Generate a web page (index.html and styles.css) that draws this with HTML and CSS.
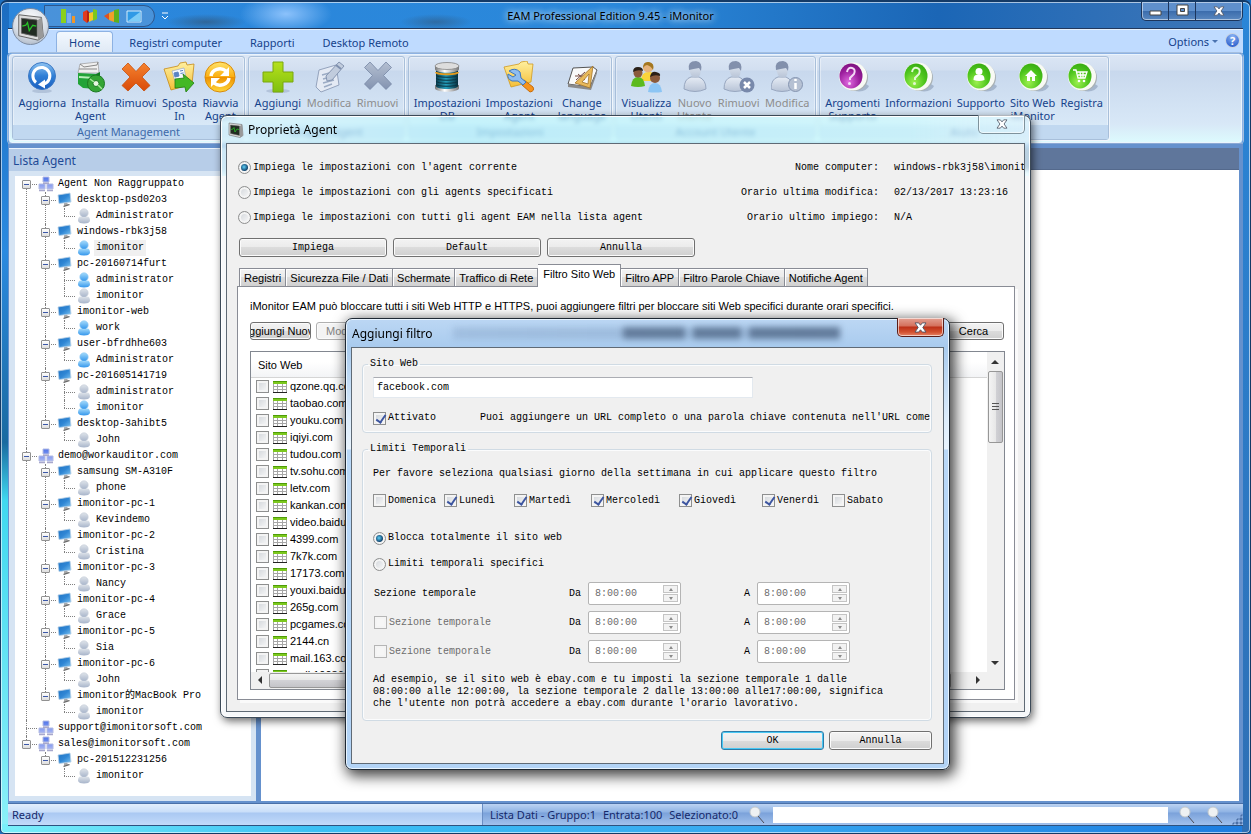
FILE: index.html
```html
<!DOCTYPE html>
<html lang="it">
<head>
    <meta charset="UTF-8">
    <meta name="viewport" content="width=device-width, initial-scale=1.0">
    <title>EAM Professional Edition 9.45 - iMonitor</title>
    <link rel="stylesheet" href="styles.css">
</head>
<body>
    <!-- icons -->
    <svg class="defs" aria-hidden="true">
        <defs>
            <linearGradient id="gBlue" x1="0" y1="0" x2="0" y2="1"><stop offset="0" stop-color="#8fc4f2"/><stop offset=".5" stop-color="#2f7fd6"/><stop offset="1" stop-color="#1b5fc0"/></linearGradient>
            <linearGradient id="gOrange" x1="0" y1="0" x2="0" y2="1"><stop offset="0" stop-color="#f5822e"/><stop offset="1" stop-color="#d94a08"/></linearGradient>
            <linearGradient id="gGold" x1="0" y1="0" x2="0" y2="1"><stop offset="0" stop-color="#ffe36b"/><stop offset=".5" stop-color="#fbae10"/><stop offset=".51" stop-color="#ee9000"/><stop offset="1" stop-color="#ffd83a"/></linearGradient>
            <linearGradient id="gFolder" x1="0" y1="0" x2="0" y2="1"><stop offset="0" stop-color="#fff0a0"/><stop offset="1" stop-color="#f4bf38"/></linearGradient>
            <linearGradient id="gPlus" x1="0" y1="0" x2="0" y2="1"><stop offset="0" stop-color="#b6e01a"/><stop offset="1" stop-color="#7fc010"/></linearGradient>
            <linearGradient id="gGrey" x1="0" y1="0" x2="0" y2="1"><stop offset="0" stop-color="#b4bfd1"/><stop offset="1" stop-color="#8393b0"/></linearGradient>
            <linearGradient id="gBody" x1="0" y1="0" x2="0" y2="1"><stop offset="0" stop-color="#e6ecf5"/><stop offset="1" stop-color="#b7c3d6"/></linearGradient>
            <linearGradient id="gMetal" x1="0" y1="0" x2="1" y2="0"><stop offset="0" stop-color="#777"/><stop offset=".4" stop-color="#fff"/><stop offset="1" stop-color="#777"/></linearGradient>
            <linearGradient id="gTeal" x1="0" y1="0" x2="1" y2="0"><stop offset="0" stop-color="#073a4c"/><stop offset=".45" stop-color="#25a0bd"/><stop offset="1" stop-color="#06303f"/></linearGradient>
            <radialGradient id="gGreen" cx=".4" cy=".75" r=".8"><stop offset="0" stop-color="#9cf04e"/><stop offset=".6" stop-color="#4cc41c"/><stop offset="1" stop-color="#36aa10"/></radialGradient>
            <radialGradient id="gPurple" cx=".4" cy=".75" r=".8"><stop offset="0" stop-color="#e06ae0"/><stop offset=".6" stop-color="#9a1d9c"/><stop offset="1" stop-color="#7a107c"/></radialGradient>
            <linearGradient id="gScreen" x1="0" y1="0" x2="1" y2="1"><stop offset="0" stop-color="#1f74c4"/><stop offset=".5" stop-color="#2f86d4"/><stop offset="1" stop-color="#7cc4f2"/></linearGradient>
            <linearGradient id="gUser" x1="0" y1="0" x2="0" y2="1"><stop offset="0" stop-color="#a5dbfb"/><stop offset="1" stop-color="#3396ec"/></linearGradient>
            <linearGradient id="gOff" x1="0" y1="0" x2="0" y2="1"><stop offset="0" stop-color="#dfe4ea"/><stop offset="1" stop-color="#a7b4ca"/></linearGradient>
            <linearGradient id="gCube" x1="0" y1="0" x2="0" y2="1"><stop offset="0" stop-color="#4f74ea"/><stop offset="1" stop-color="#a9b6f2"/></linearGradient>
        </defs>
        <symbol id="i-refresh" viewBox="0 0 32 32">
            <ellipse cx="16" cy="30" rx="10" ry="2" fill="#8a9cb8" opacity=".4"/>
            <circle cx="16" cy="15" r="13.500" fill="url(#gBlue)" stroke="#3c78c4"/>
            <path d="M10 21.500A8.500 8.500 0 1 1 18 23" fill="none" stroke="#fff" stroke-width="3"/>
            <path d="M19 18.500v9l-7-4z" fill="#fff"/>
        </symbol>
        <symbol id="i-install" viewBox="0 0 32 32">
            <path d="M4 12 6 3l18-2 1 11z" fill="#f0f0f0" stroke="#999" stroke-width=".7"/>
            <path d="M6 3l4 3 13-2 1-3M5 8h18" fill="none" stroke="#888"/>
            <path d="M4 12l18 1v15l-13-1-5-4z" fill="#22a338"/><path d="M22 13l4-2v12l-4 5z" fill="#117a25"/>
            <path d="M5 15l16 1v2L5 17z" fill="#b9efb9"/>
            <circle cx="22" cy="22.500" r="8.500" fill="#35a535" stroke="#1c7a22"/><circle cx="22" cy="22.500" r="3" fill="#e8f7e0" stroke="#1c7a22"/>
            <path d="M16 18l4 3M24 24l4 4" stroke="#a6e89a" stroke-width="1.500"/>
        </symbol>
        <symbol id="i-x" viewBox="0 0 32 32">
            <path d="M8 2l8 8.500L24 2l6 6-8 8 8 8.500-6 5.500-8-8-8 8-6-5.500L10 16 2 8z" fill="url(#gOrange)" stroke="#c8500c" stroke-width=".8" stroke-linejoin="round"/>
        </symbol>
        <symbol id="i-xgrey" viewBox="0 0 32 32">
            <path d="M8 1l8 8.500L24 1l5.500 5.500-8 8 8 8.500-5.500 5.500-8-8-8 8-5.500-5.500 8-8.500-8-8z" fill="url(#gGrey)" stroke="#7686a4" stroke-width=".8"/>
        </symbol>
        <symbol id="i-move" viewBox="0 0 32 32">
            <path d="M1 8l14-3 2-3 6-1 1 3 7-1-2 20-21 6z" fill="url(#gFolder)" stroke="#c78a16" stroke-width=".8"/>
            <path d="M9 10l12-3 2 10-11 3z" fill="#f5f8fd" stroke="#8aa0c8" stroke-width=".6"/><path d="M11 12l4-1 1 4-4 1zM17 10l3-.6M17.500 12.500l3-.6" fill="#5a83c4" stroke="#5a83c4"/>
            <path d="M12 18l9-1-1-4 11 9-8 9-1-5-10 1z" fill="#43b824" stroke="#217c10" stroke-width=".8"/>
        </symbol>
        <symbol id="i-restart" viewBox="0 0 32 32">
            <circle cx="16" cy="16" r="15" fill="url(#gGold)" stroke="#d98a08"/>
            <path d="M7 15a9 8 0 0 1 15-5M25 17a9 8 0 0 1-15 5" fill="none" stroke="#fff" stroke-width="3.500"/>
            <path d="M25 6v9h-9zM7 26v-9h9z" fill="#fff"/>
        </symbol>
        <symbol id="i-plus" viewBox="0 0 32 32">
            <ellipse cx="16" cy="30" rx="12" ry="2" fill="#8a9cb8" opacity=".4"/>
            <path d="M11 1h10v10h10v10H21v10H11V21H1V11h10z" fill="url(#gPlus)" stroke="#7aa80c"/>
        </symbol>
        <symbol id="i-edit" viewBox="0 0 32 32">
            <path d="M6 9l17-5 3 20-18 7-5-5z" fill="#e4eaf4" stroke="#94a3bd"/>
            <path d="M9 14l11-3M10 18l11-3M10 22l11-3M11 26l8-3" stroke="#9babc4" stroke-width="1.500"/>
            <path d="M14 20l-1-5L26 1l5 4-12 14z" fill="#c1ccdd" stroke="#8595b1"/><path d="M23 4l5 4" stroke="#7f90ae" stroke-width="2"/>
        </symbol>
        <symbol id="i-db" viewBox="0 0 32 32">
            <path d="M4 27v-3h24v3c0 5-24 5-24 0z" fill="url(#gMetal)"/>
            <path d="M5 8h22v17c0 4-22 4-22 0z" fill="url(#gTeal)"/>
            <path d="M5 14c0 3 22 3 22 0M5 17c0 3 22 3 22 0M5 20c0 3 22 3 22 0M5 23c0 3 22 3 22 0" fill="none" stroke="#0a3442"/>
            <path d="M5 11c0 3 22 3 22 0" fill="none" stroke="#e39a1e" stroke-width="2"/>
            <path d="M4 5v3c0 5 24 5 24 0V5z" fill="url(#gMetal)"/><ellipse cx="16" cy="5" rx="12" ry="3.500" fill="#ddd" stroke="#777" stroke-width=".7"/>
        </symbol>
        <symbol id="i-tool" viewBox="0 0 32 32">
            <path d="M1 6l15-3 2-2 6-1 1 3 5 0-2 18-20 5z" fill="url(#gFolder)" stroke="#d09a22" stroke-width=".8"/>
            <path d="M21 19l9 7q2 4-3 5l-8-7z" fill="#f5931d" stroke="#c96c08"/>
            <path d="M6 10q6-4 11 1l1 6 5 4-3 3-5-4-6 0q-5-2-4-7l5 3 3-2z" fill="#8fbdf0" stroke="#3c77c0"/>
        </symbol>
        <symbol id="i-lang" viewBox="0 0 32 32">
            <path d="M7 7l20-1 4 3-7 17-22-3z" fill="#fafafa" stroke="#555"/><path d="M2 23l22 3 7-17v3l-6 17-23-3z" fill="#8a8a8a"/>
            <path d="M10 19l9-8M12 13l7 6M9 15l9 0" stroke="#774a40" fill="none"/>
            <path d="M27 5l-3 22-15-5zM23 13l-7 8 6 2z" fill="#e9b95a" stroke="#a2732a" stroke-width=".8" fill-rule="evenodd"/>
        </symbol>
        <symbol id="i-users" viewBox="0 0 32 32">
            <path d="M10 20q0-10 9-9t7 9z" fill="#fbd43a"/><circle cx="17" cy="6.500" r="5" fill="#e6b27a"/><path d="M12 7q0-7 6-6t4 8q-2-4-6-5-2 0-4 3z" fill="#a47720"/>
            <path d="M0 25q1-9 7-9t7 9q-7 2-14 0z" fill="#5cba1e"/><circle cx="7" cy="12" r="4.500" fill="#8a5a3c"/><path d="M2 11q0-5 5-5t5 4q-5-2-10 1z" fill="#2b2018"/>
            <path d="M17 31q1-9 7-9t7 9q-7 1-14 0z" fill="#8cc5f4"/><circle cx="24" cy="17" r="5" fill="#8a5a3c"/><path d="M19 16q1-6 6-5t4 4q-5-2-10 1z" fill="#2b2018"/>
        </symbol>
        <symbol id="i-person" viewBox="0 0 32 32">
            <path d="M5 28q0-10 7-12h8q7 3 7 12-11 5-22 0z" fill="url(#gBody)" stroke="#98a7c0"/>
            <path d="M10 8q-1-7 6-7t6 7l-1 6q-5 6-9 0z" fill="url(#gBody)"/><path d="M10 9q-2-9 7-9 7 1 5 10l-2-3q-6 1-10 2z" fill="#8290ac"/>
        </symbol>
        <symbol id="i-persondel" viewBox="0 0 32 32">
            <use href="#i-person" x="-4" width="32" height="32"/><circle cx="24" cy="24" r="7.500" fill="#7889ab"/><path d="M21 21l6 6m0-6l-6 6" stroke="#fff" stroke-width="2.500"/>
        </symbol>
        <symbol id="i-personinfo" viewBox="0 0 32 32">
            <use href="#i-person" x="-5" width="32" height="32"/><circle cx="24.500" cy="23.500" r="7" fill="#b6c1d3" stroke="#8595b1"/><path d="M24.500 22v6M24.500 18v2" stroke="#fff" stroke-width="2.500"/>
        </symbol>
        <symbol id="i-ball" viewBox="0 0 32 32">
            <path d="M10 28q18 6 22-3l-8-5z" fill="#7d8faa" opacity=".5"/>
            <circle cx="17.500" cy="16.500" r="13.500" fill="#aab2b4"/><circle cx="16" cy="15.500" r="14" fill="#f8faf4"/>
        </symbol>
        <symbol id="i-topics" viewBox="0 0 32 32">
            <use href="#i-ball"/><ellipse cx="14" cy="15" rx="11.500" ry="12.500" fill="url(#gPurple)"/>
            <path d="M10 11q1-5 5-4t2 6l-4 4v2" fill="none" stroke="#f3d9f5" stroke-width="2"/><circle cx="12.500" cy="22.500" r="1.500" fill="#f3d9f5"/>
        </symbol>
        <symbol id="i-info" viewBox="0 0 32 32">
            <use href="#i-ball"/><ellipse cx="14" cy="15" rx="11.500" ry="12.500" fill="url(#gGreen)"/>
            <path d="M10 11q1-5 5-4t2 6l-4 4v2" fill="none" stroke="#e4f8d4" stroke-width="2"/><circle cx="12.500" cy="22.500" r="1.500" fill="#e4f8d4"/>
        </symbol>
        <symbol id="i-support" viewBox="0 0 32 32">
            <use href="#i-ball"/><ellipse cx="14" cy="15" rx="11.500" ry="12.500" fill="url(#gGreen)"/>
            <circle cx="14" cy="10.500" r="3.500" fill="#fff"/><path d="M8.500 19q0-5 3-5h5q3 0 3 5-5 2-11 0z" fill="#fff"/>
        </symbol>
        <symbol id="i-home" viewBox="0 0 32 32">
            <use href="#i-ball"/><ellipse cx="14" cy="15" rx="11.500" ry="12.500" fill="url(#gGreen)"/>
            <path d="M14 9l6 6h-2v5h-3v-4h-2v4h-3v-5H8z" fill="#fff"/>
        </symbol>
        <symbol id="i-cart" viewBox="0 0 32 32">
            <use href="#i-ball"/><ellipse cx="14" cy="15" rx="11.500" ry="12.500" fill="url(#gGreen)"/>
            <path d="M7 9h3l2 8h7l2-6H11M12 14h8M14 11l1 6M17 11v6" fill="none" stroke="#fff" stroke-width="1.300"/><circle cx="13" cy="20" r="1.300" fill="#fff"/><circle cx="18" cy="20" r="1.300" fill="#fff"/>
        </symbol>
        <symbol id="i-logo" viewBox="0 0 32 32">
            <path d="M2 2l26 3 2 22-6 4L2 26z" fill="#dcdcdc" stroke="#555"/><path d="M28 5l2 22-6 4V8z" fill="#999"/>
            <path d="M5 6l18 2v19L5 23z" fill="#222c22" stroke="#666"/><path d="M6 15l4-1 2-3 2 9 4-6 4 1" fill="none" stroke="#28c428" stroke-width="1.500"/>
        </symbol>
        <symbol id="i-group" viewBox="0 0 16 16">
            <path d="M5 1h6v5H5zM1 8h6v5H1zM9 8h6v5H9z" fill="url(#gCube)" stroke="#b4bce4" stroke-linejoin="round"/>
            <path d="M1 14.500h6M9 14.500h6M5 7.200h6" stroke="#a8a8cc" stroke-width="1.500"/>
        </symbol>
        <symbol id="i-pc" viewBox="0 0 16 16">
            <path d="M7 11l3-1 1 3-4 1z" fill="#a8a8a8"/><path d="M6 14l6-2 1 1-6 2z" fill="#6a6a6a"/>
            <path d="M1 3l12-2 1 9-12 1.500z" fill="url(#gScreen)" stroke="#b6cfe6" stroke-width=".8"/>
        </symbol>
        <symbol id="i-on" viewBox="0 0 16 16">
            <circle cx="8" cy="5" r="4.200" fill="url(#gUser)" stroke="#8cc8f4" stroke-width=".6"/><path d="M2 13q0-5 3-4.500 3 1.500 6 0 3-.5 3 4.500-1 2.500-6 2.500t-6-2.500z" fill="url(#gUser)"/>
        </symbol>
        <symbol id="i-off" viewBox="0 0 16 16">
            <circle cx="8" cy="5" r="4.200" fill="url(#gOff)" stroke="#c4ccd8" stroke-width=".6"/><path d="M2 13q0-5 3-4.500 3 1.500 6 0 3-.5 3 4.500-1 2.500-6 2.500t-6-2.500z" fill="url(#gOff)"/>
        </symbol>
        <symbol id="i-table" viewBox="0 0 14 13">
            <path d="M0 1h14v11H0z" fill="#fff"/><path d="M.5 4v8M4.500 4v8M9.500 4v8M13.500 4v8M0 6.500h14M0 9.500h14" stroke="#a6a6a6" fill="none"/>
            <path d="M0 1h14v3H0z" fill="#7cc81e"/><path d="M0 1.500h14" stroke="#4f9c08"/><path d="M0 12.500h14" stroke="#222"/>
        </symbol>
        <symbol id="i-lens" viewBox="0 0 16 18">
            <path d="M9 10l6 7" stroke="#4b4b55"/><circle cx="6" cy="6" r="5" fill="#eef1f2" stroke="#c2c8cc"/>
        </symbol>
        <symbol id="i-close" viewBox="0 0 14 12">
            <path d="M1 1h4l2 2.500L9 1h4L9.500 6l3.500 5H9L7 8.500 5 11H1l3.500-5z" fill="#fff" stroke="#505868"/>
        </symbol>
    </svg>

    <div class="app">
        <header class="titlebar">
            <button class="orb" aria-label="Menu"><svg width="28" height="28"><use href="#i-logo"/></svg></button>
            <div class="quick">
                <button aria-label="Grafico a barre"><svg width="16" height="16" viewBox="0 0 16 16"><path d="M1 1h5v14H1z" fill="#8bd01c"/><path d="M7 5h4v10H7z" fill="#7aaef0"/><path d="M12 8h3v7h-3z" fill="#f0962a"/></svg></button>
                <button aria-label="Grafico 3D"><svg width="16" height="16" viewBox="0 0 16 16"><path d="M1 4l4-2v13l-4-3z" fill="#e03a1e"/><path d="M5 2l3 3v7l-3 3z" fill="#b32210"/><path d="M7 5l4-1v8l-4 2z" fill="#f5c82a"/><path d="M11 1l4 1v9l-4 2z" fill="#7cc81e"/></svg></button>
                <button aria-label="Grafico a colonne"><svg width="16" height="16" viewBox="0 0 16 16"><path d="M0 8l5-3v7z" fill="#e0521e"/><path d="M5 5l5-2v11l-5-2z" fill="#f0a02a"/><path d="M10 2l5-1v14l-5-1z" fill="#5cb01e"/></svg></button>
                <button aria-label="Schermo"><svg width="16" height="16" viewBox="0 0 16 16"><path d="M1 3h14v11H1z" fill="#2f9ae6" stroke="#d5ecfb"/><path d="M2 13L14 4v9z" fill="#7cccf6"/></svg></button>
            </div>
            <button class="quick-more" aria-label="Personalizza"><svg width="8" height="8" viewBox="0 0 8 8"><path d="M1 1h6M1 4l3 3 3-3" fill="none" stroke="#fff"/></svg></button>
            <h1>EAM Professional Edition 9.45 - iMonitor</h1>
            <div class="win-controls">
                <button class="win-min" aria-label="Riduci"><svg width="13" height="12" viewBox="0 0 13 12"><path d="M1 7h11v4H1z" fill="#fff" stroke="#444"/></svg></button>
                <button class="win-max" aria-label="Ingrandisci"><svg width="13" height="12" viewBox="0 0 13 12"><path d="M1 1h11v10H1zM4.500 4.500h4v3h-4z" fill="#fff" fill-rule="evenodd" stroke="#444"/></svg></button>
                <button class="win-close" aria-label="Chiudi"><svg width="12" height="10"><use href="#i-close"/></svg></button>
            </div>
        </header>

        <nav class="tabs">
            <a class="tab active" href="#">Home</a>
            <a class="tab" href="#">Registri computer</a>
            <a class="tab" href="#">Rapporti</a>
            <a class="tab" href="#">Desktop Remoto</a>
            <button class="options">Options <i></i></button>
            <button class="help" aria-label="Aiuto">?</button>
        </nav>

        <div class="ribbon">
            <section class="group g-agent">
                <div class="tools">
                    <button><svg><use href="#i-refresh"/></svg>Aggiorna</button>
                    <button><svg><use href="#i-install"/></svg>Installa<br>Agent</button>
                    <button><svg><use href="#i-x"/></svg>Rimuovi</button>
                    <button><svg><use href="#i-move"/></svg>Sposta<br>In</button>
                    <button><svg><use href="#i-restart"/></svg>Riavvia<br>Agent</button>
                </div>
                <h2>Agent Management</h2>
            </section>
            <section class="group g-groups">
                <div class="tools">
                    <button><svg><use href="#i-plus"/></svg>Aggiungi</button>
                    <button disabled><svg><use href="#i-edit"/></svg>Modifica</button>
                    <button disabled><svg><use href="#i-xgrey"/></svg>Rimuovi</button>
                </div>
                <h2>Gruppo Agent</h2>
            </section>
            <section class="group g-settings">
                <div class="tools">
                    <button><svg><use href="#i-db"/></svg>Impostazioni<br>DB</button>
                    <button><svg><use href="#i-tool"/></svg>Impostazioni<br>Agent</button>
                    <button><svg><use href="#i-lang"/></svg>Change<br>language</button>
                </div>
                <h2>Impostazioni</h2>
            </section>
            <section class="group g-users">
                <div class="tools">
                    <button><svg><use href="#i-users"/></svg>Visualizza<br>Utenti</button>
                    <button disabled><svg><use href="#i-person"/></svg>Nuovo<br>Utente</button>
                    <button disabled><svg><use href="#i-persondel"/></svg>Rimuovi</button>
                    <button disabled><svg><use href="#i-personinfo"/></svg>Modifica</button>
                </div>
                <h2>Account Utente</h2>
            </section>
            <section class="group g-help">
                <div class="tools">
                    <button><svg><use href="#i-topics"/></svg>Argomenti<br>Supporto</button>
                    <button><svg><use href="#i-info"/></svg>Informazioni</button>
                    <button><svg><use href="#i-support"/></svg>Supporto</button>
                    <button><svg><use href="#i-home"/></svg>Sito Web<br>iMonitor</button>
                    <button><svg><use href="#i-cart"/></svg>Registra</button>
                </div>
                <h2>Aiuto</h2>
            </section>
        </div>

        <main class="workspace">
            <aside class="sidebar">
                <h2>Lista Agent</h2>
                <ul class="tree">
                    <li><div class="row"><button class="toggle" aria-label="Comprimi"></button><svg><use href="#i-group"/></svg><span>Agent Non Raggruppato</span></div>
                        <ul>
                            <li><div class="row"><button class="toggle" aria-label="Comprimi"></button><svg><use href="#i-pc"/></svg><span>desktop-psd02o3</span></div>
                                <ul><li><div class="row leaf"><svg><use href="#i-off"/></svg><span>Administrator</span></div></li></ul></li>
                            <li><div class="row"><button class="toggle" aria-label="Comprimi"></button><svg><use href="#i-pc"/></svg><span>windows-rbk3j58</span></div>
                                <ul><li><div class="row leaf"><svg><use href="#i-on"/></svg><span class="selected">imonitor</span></div></li></ul></li>
                            <li><div class="row"><button class="toggle" aria-label="Comprimi"></button><svg><use href="#i-pc"/></svg><span>pc-20160714furt</span></div>
                                <ul><li><div class="row leaf"><svg><use href="#i-on"/></svg><span>administrator</span></div></li>
                                    <li><div class="row leaf"><svg><use href="#i-off"/></svg><span>imonitor</span></div></li></ul></li>
                            <li><div class="row"><button class="toggle" aria-label="Comprimi"></button><svg><use href="#i-pc"/></svg><span>imonitor-web</span></div>
                                <ul><li><div class="row leaf"><svg><use href="#i-on"/></svg><span>work</span></div></li></ul></li>
                            <li><div class="row"><button class="toggle" aria-label="Comprimi"></button><svg><use href="#i-pc"/></svg><span>user-bfrdhhe603</span></div>
                                <ul><li><div class="row leaf"><svg><use href="#i-on"/></svg><span>Administrator</span></div></li></ul></li>
                            <li><div class="row"><button class="toggle" aria-label="Comprimi"></button><svg><use href="#i-pc"/></svg><span>pc-201605141719</span></div>
                                <ul><li><div class="row leaf"><svg><use href="#i-off"/></svg><span>administrator</span></div></li>
                                    <li><div class="row leaf"><svg><use href="#i-on"/></svg><span>imonitor</span></div></li></ul></li>
                            <li><div class="row"><button class="toggle" aria-label="Comprimi"></button><svg><use href="#i-pc"/></svg><span>desktop-3ahibt5</span></div>
                                <ul><li><div class="row leaf"><svg><use href="#i-off"/></svg><span>John</span></div></li></ul></li>
                        </ul>
                    </li>
                    <li><div class="row"><button class="toggle" aria-label="Comprimi"></button><svg><use href="#i-group"/></svg><span>demo@workauditor.com</span></div>
                        <ul>
                            <li><div class="row"><button class="toggle" aria-label="Comprimi"></button><svg><use href="#i-pc"/></svg><span>samsung SM-A310F</span></div>
                                <ul><li><div class="row leaf"><svg><use href="#i-off"/></svg><span>phone</span></div></li></ul></li>
                            <li><div class="row"><button class="toggle" aria-label="Comprimi"></button><svg><use href="#i-pc"/></svg><span>imonitor-pc-1</span></div>
                                <ul><li><div class="row leaf"><svg><use href="#i-off"/></svg><span>Kevindemo</span></div></li></ul></li>
                            <li><div class="row"><button class="toggle" aria-label="Comprimi"></button><svg><use href="#i-pc"/></svg><span>imonitor-pc-2</span></div>
                                <ul><li><div class="row leaf"><svg><use href="#i-off"/></svg><span>Cristina</span></div></li></ul></li>
                            <li><div class="row"><button class="toggle" aria-label="Comprimi"></button><svg><use href="#i-pc"/></svg><span>imonitor-pc-3</span></div>
                                <ul><li><div class="row leaf"><svg><use href="#i-off"/></svg><span>Nancy</span></div></li></ul></li>
                            <li><div class="row"><button class="toggle" aria-label="Comprimi"></button><svg><use href="#i-pc"/></svg><span>imonitor-pc-4</span></div>
                                <ul><li><div class="row leaf"><svg><use href="#i-off"/></svg><span>Grace</span></div></li></ul></li>
                            <li><div class="row"><button class="toggle" aria-label="Comprimi"></button><svg><use href="#i-pc"/></svg><span>imonitor-pc-5</span></div>
                                <ul><li><div class="row leaf"><svg><use href="#i-off"/></svg><span>Sia</span></div></li></ul></li>
                            <li><div class="row"><button class="toggle" aria-label="Comprimi"></button><svg><use href="#i-pc"/></svg><span>imonitor-pc-6</span></div>
                                <ul><li><div class="row leaf"><svg><use href="#i-off"/></svg><span>John</span></div></li></ul></li>
                            <li><div class="row"><button class="toggle" aria-label="Comprimi"></button><svg><use href="#i-pc"/></svg><span>imonitor的MacBook Pro</span></div>
                                <ul><li><div class="row leaf"><svg><use href="#i-off"/></svg><span>imonitor</span></div></li></ul></li>
                        </ul>
                    </li>
                    <li><div class="row leaf"><svg><use href="#i-group"/></svg><span>support@imonitorsoft.com</span></div></li>
                    <li><div class="row"><button class="toggle" aria-label="Comprimi"></button><svg><use href="#i-group"/></svg><span>sales@imonitorsoft.com</span></div>
                        <ul>
                            <li><div class="row"><button class="toggle" aria-label="Comprimi"></button><svg><use href="#i-pc"/></svg><span>pc-201512231256</span></div>
                                <ul><li><div class="row leaf"><svg><use href="#i-off"/></svg><span>imonitor</span></div></li></ul></li>
                        </ul>
                    </li>
                </ul>
            </aside>
            <section class="content"><div class="content-head"></div></section>
        </main>

        <footer class="statusbar">
            <div class="ready">Ready</div>
            <div class="counts">
                <span>Lista Dati - Gruppo:1</span><span>Entrata:100</span><span>Selezionato:0</span>
                <svg><use href="#i-lens"/></svg>
                <input type="text" aria-label="Cerca nella lista">
                <button aria-label="Cerca precedente"><svg><use href="#i-lens"/></svg></button>
                <button aria-label="Cerca successivo"><svg><use href="#i-lens"/></svg></button>
                <i class="grip"></i>
            </div>
        </footer>
    </div>

    <!-- agent properties -->
    <div class="dialog props" role="dialog" aria-labelledby="props-title">
        <div class="dialog-title">
            <svg width="16" height="16"><use href="#i-logo"/></svg>
            <h2 id="props-title">Proprietà Agent</h2>
            <button class="dialog-close" aria-label="Chiudi"><svg width="12" height="10"><use href="#i-close"/></svg></button>
        </div>
        <div class="dialog-body">
            <div class="props-head">
                <div class="scope">
                    <label><input type="radio" name="scope" checked>Impiega le impostazioni con l'agent corrente</label>
                    <label><input type="radio" name="scope">Impiega le impostazioni con gli agents specificati</label>
                    <label><input type="radio" name="scope">Impiega le impostazioni con tutti gli agent EAM nella lista agent</label>
                </div>
                <dl>
                    <dt>Nome computer:</dt><dd>windows-rbk3j58\imonitor</dd>
                    <dt>Orario ultima modifica:</dt><dd>02/13/2017 13:23:16</dd>
                    <dt>Orario ultimo impiego:</dt><dd>N/A</dd>
                </dl>
            </div>
            <div class="props-actions">
                <button class="btn">Impiega</button>
                <button class="btn">Default</button>
                <button class="btn">Annulla</button>
            </div>
            <div class="props-tabs">
                <button>Registri</button>
                <button>Sicurezza File / Dati</button>
                <button>Schermate</button>
                <button>Traffico di Rete</button>
                <button class="active">Filtro Sito Web</button>
                <button>Filtro APP</button>
                <button>Filtro Parole Chiave</button>
                <button>Notifiche Agent</button>
            </div>
            <div class="pane">
                <p>iMonitor EAM può bloccare tutti i siti Web HTTP e HTTPS, puoi aggiungere filtri per bloccare siti Web specifici durante orari specifici.</p>
                <div class="pane-actions">
                    <button class="btn"><span>Aggiungi Nuovo</span></button>
                    <button class="btn" disabled>Modifica</button>
                    <button class="btn search">Cerca</button>
                </div>
                <div class="list">
                    <div class="list-rows">
                        <table>
                            <thead><tr><th>Sito Web</th></tr></thead>
                            <tbody>
                                <tr><td><label><input type="checkbox"><svg><use href="#i-table"/></svg>qzone.qq.com</label></td></tr>
                                <tr><td><label><input type="checkbox"><svg><use href="#i-table"/></svg>taobao.com</label></td></tr>
                                <tr><td><label><input type="checkbox"><svg><use href="#i-table"/></svg>youku.com</label></td></tr>
                                <tr><td><label><input type="checkbox"><svg><use href="#i-table"/></svg>iqiyi.com</label></td></tr>
                                <tr><td><label><input type="checkbox"><svg><use href="#i-table"/></svg>tudou.com</label></td></tr>
                                <tr><td><label><input type="checkbox"><svg><use href="#i-table"/></svg>tv.sohu.com</label></td></tr>
                                <tr><td><label><input type="checkbox"><svg><use href="#i-table"/></svg>letv.com</label></td></tr>
                                <tr><td><label><input type="checkbox"><svg><use href="#i-table"/></svg>kankan.com</label></td></tr>
                                <tr><td><label><input type="checkbox"><svg><use href="#i-table"/></svg>video.baidu.com</label></td></tr>
                                <tr><td><label><input type="checkbox"><svg><use href="#i-table"/></svg>4399.com</label></td></tr>
                                <tr><td><label><input type="checkbox"><svg><use href="#i-table"/></svg>7k7k.com</label></td></tr>
                                <tr><td><label><input type="checkbox"><svg><use href="#i-table"/></svg>17173.com</label></td></tr>
                                <tr><td><label><input type="checkbox"><svg><use href="#i-table"/></svg>youxi.baidu.com</label></td></tr>
                                <tr><td><label><input type="checkbox"><svg><use href="#i-table"/></svg>265g.com</label></td></tr>
                                <tr><td><label><input type="checkbox"><svg><use href="#i-table"/></svg>pcgames.com.cn</label></td></tr>
                                <tr><td><label><input type="checkbox"><svg><use href="#i-table"/></svg>2144.cn</label></td></tr>
                                <tr><td><label><input type="checkbox"><svg><use href="#i-table"/></svg>mail.163.com</label></td></tr>
                                <tr><td><label><input type="checkbox"><svg><use href="#i-table"/></svg>mail.10086.cn</label></td></tr>
                            </tbody>
                        </table>
                    </div>
                    <div class="vscroll"><i class="arrow up"></i><div class="thumb"></div><i class="arrow down"></i></div>
                    <div class="hscroll"><i class="arrow left"></i><div class="thumb"></div><i class="arrow right"></i></div>
                </div>
            </div>
        </div>
    </div>

    <!-- add filter -->
    <div class="dialog filter" role="dialog" aria-labelledby="filter-title">
        <div class="dialog-title">
            <h2 id="filter-title">Aggiungi filtro</h2>
            <i class="smudge"></i>
            <button class="dialog-close red" aria-label="Chiudi"><svg width="13" height="11"><use href="#i-close"/></svg></button>
        </div>
        <div class="dialog-body">
            <fieldset class="site">
                <legend>Sito Web</legend>
                <input type="text" class="url" aria-label="Sito Web" value="facebook.com" autofocus>
                <div class="site-row">
                    <label><input type="checkbox" checked>Attivato</label>
                    <span>Puoi aggiungere un URL completo o una parola chiave contenuta nell'URL come</span>
                </div>
            </fieldset>
            <fieldset class="limits">
                <legend>Limiti Temporali</legend>
                <p>Per favore seleziona qualsiasi giorno della settimana in cui applicare questo filtro</p>
                <div class="days">
                    <label><input type="checkbox">Domenica</label>
                    <label><input type="checkbox" checked>Lunedì</label>
                    <label><input type="checkbox" checked>Martedì</label>
                    <label><input type="checkbox" checked>Mercoledì</label>
                    <label><input type="checkbox" checked>Giovedì</label>
                    <label><input type="checkbox" checked>Venerdì</label>
                    <label><input type="checkbox">Sabato</label>
                </div>
                <label class="mode"><input type="radio" name="mode" checked>Blocca totalmente il sito web</label>
                <label class="mode"><input type="radio" name="mode">Limiti temporali specifici</label>
                <div class="slots">
                    <div class="slot">
                        <span class="slot-name">Sezione temporale</span>
                        <label for="from1">Da</label>
                        <div class="spin"><input type="text" id="from1" value="8:00:00" disabled><div><button disabled aria-label="Su"></button><button disabled aria-label="Giù"></button></div></div>
                        <label for="to1" class="to">A</label>
                        <div class="spin"><input type="text" id="to1" value="8:00:00" disabled><div><button disabled aria-label="Su"></button><button disabled aria-label="Giù"></button></div></div>
                    </div>
                    <div class="slot">
                        <label class="slot-name off"><input type="checkbox" disabled>Sezione temporale</label>
                        <label for="from2">Da</label>
                        <div class="spin"><input type="text" id="from2" value="8:00:00" disabled><div><button disabled aria-label="Su"></button><button disabled aria-label="Giù"></button></div></div>
                        <label for="to2" class="to">A</label>
                        <div class="spin"><input type="text" id="to2" value="8:00:00" disabled><div><button disabled aria-label="Su"></button><button disabled aria-label="Giù"></button></div></div>
                    </div>
                    <div class="slot">
                        <label class="slot-name off"><input type="checkbox" disabled>Sezione temporale</label>
                        <label for="from3">Da</label>
                        <div class="spin"><input type="text" id="from3" value="8:00:00" disabled><div><button disabled aria-label="Su"></button><button disabled aria-label="Giù"></button></div></div>
                        <label for="to3" class="to">A</label>
                        <div class="spin"><input type="text" id="to3" value="8:00:00" disabled><div><button disabled aria-label="Su"></button><button disabled aria-label="Giù"></button></div></div>
                    </div>
                </div>
                <p class="example">Ad esempio, se il sito web è ebay.com e tu imposti la sezione temporale 1 dalle<br>08:00:00 alle 12:00:00, la sezione temporale 2 dalle 13:00:00 alle17:00:00, significa<br>che l'utente non potrà accedere a ebay.com durante l'orario lavorativo.</p>
            </fieldset>
            <div class="filter-actions">
                <button class="btn primary">OK</button>
                <button class="btn">Annulla</button>
            </div>
        </div>
    </div>
</body>
</html>
```
FILE: styles.css
```css
* {
    box-sizing: border-box;
}
body {
    margin: 0;
    font-family: "Noto Sans", "Open Sans", sans-serif;
    font-size: 11px;
    color: #000;
    background: #1d6fc0;
}
h1, h2, p, ul, dl, dd {
    margin: 0;
    padding: 0;
    font-weight: normal;
    font-size: inherit;
}
ul { list-style: none; }
button {
    font: inherit;
    color: inherit;
    border: none;
    background: none;
    padding: 0;
}
a { color: inherit; text-decoration: none; }
.defs {
    position: absolute;
    width: 0;
    height: 0;
}

/* main window */
.app {
    min-height: 100vh;
    display: flex;
    flex-direction: column;
    color: #15428b;
    border: 1px solid #143a66;
    border-top-width: 2px;
    border-radius: 7px 7px 5px 5px;
    box-shadow: inset 0 0 0 1px rgba(255, 255, 255, 0.6);
    padding: 0 7px 7px;
    background:
        linear-gradient(#2a86d8, #2f6fb4) right top / 8px 100% no-repeat,
        linear-gradient(90deg, #7af0fa, #3cc0f4 25%, #38a8f0 60%, #1c7ce0) left bottom / 100% 9px no-repeat,
        linear-gradient(#1c6cc0, #2b8ae0 30%, #1a6aa0 53%, #40d8f0 60%, #8cf0f8) left top / 8px 100% no-repeat,
        radial-gradient(ellipse 46px 20px at 285px 12px, rgba(150, 200, 255, 0.9), transparent) no-repeat,
        radial-gradient(ellipse 40px 8px at 205px 20px, rgba(50, 80, 110, 0.6), transparent) no-repeat,
        radial-gradient(ellipse 36px 8px at 435px 20px, rgba(50, 80, 110, 0.5), transparent) no-repeat,
        linear-gradient(90deg, #2b86dc, #2a88da 50%, #1b66b6 75%, #4178b8);
}
.titlebar {
    position: relative;
    display: flex;
    height: 26px;
}
.orb {
    position: absolute;
    left: 4px;
    top: 6px;
    z-index: 2;
    width: 37px;
    height: 37px;
    border-radius: 50%;
    border: 1px solid #7d8ca2;
    background: radial-gradient(circle at 50% 30%, #fff, #d4dbe4 60%, #9aa7b8);
    display: flex;
    align-items: center;
    justify-content: center;
}
.quick {
    display: flex;
    align-items: center;
    gap: 6px;
    height: 22px;
    margin: 3px 0 0 36px;
    padding: 0 12px 0 15px;
    border: 1px solid #2e568c;
    border-radius: 0 11px 11px 0;
    background: rgba(120, 165, 215, 0.4);
}
.quick button { height: 16px; }
.quick-more {
    width: 20px;
    height: 26px;
}
.titlebar h1 {
    position: absolute;
    left: 0;
    right: 0;
    top: 6px;
    line-height: 16px;
    padding-right: 30px;
    text-align: center;
    color: #000;
    text-shadow: 0 0 6px #cfe6ff, 0 0 8px #cfe6ff;
}
.win-controls {
    position: relative;
    display: flex;
    height: 19px;
    margin-left: auto;
    border: 1px solid #1c355c;
    border-top: none;
    border-radius: 0 0 5px 5px;
    box-shadow: inset 0 0 0 1px rgba(255, 255, 255, 0.5);
    background: linear-gradient(#5f90cc 50%, #3a6cac 50%, #5a88c0);
}
.win-controls button {
    width: 27px;
    border-right: 1px solid #1c355c;
}
.win-controls .win-close {
    width: 46px;
    border-right: none;
}

/* ribbon */
.tabs {
    display: flex;
    align-items: flex-end;
    height: 25px;
    padding-left: 48px;
    background: #bfdbff;
    border-top: 1px solid #22385c;
    box-shadow: inset 0 1px #e6f2ff;
}
.tab {
    height: 22px;
    line-height: 20px;
    padding: 2px 12px 0;
    margin-right: 4px;
}
.tab.active {
    background: linear-gradient(#f2f8fe, #dfe9f5);
    border: 1px solid #8db2e3;
    border-bottom: none;
    border-radius: 4px 4px 0 0;
    line-height: 18px;
}
.options {
    margin: 0 8px 4px auto;
}
.options i {
    display: inline-block;
    vertical-align: 3px;
    border: 3px solid transparent;
    border-top-color: #4a73b0;
    border-bottom: none;
}
.help {
    width: 13px;
    height: 13px;
    margin: 0 4px 6px 0;
    border-radius: 50%;
    background: radial-gradient(circle at 50% 20%, #8ab4f4, #1d50c4);
    box-shadow: 0 0 0 1px #c8d2e0;
    color: #fff;
    font-weight: bold;
    line-height: 13px;
}
.ribbon {
    display: flex;
    gap: 3px;
    height: 91px;
    padding: 2px 3px 3px;
    border: 1px solid #8db2e3;
    border-radius: 4px;
    background: linear-gradient(#dce7f5, #d2dff0 16px, #c8d8ed 17px, #d8e8f7 70px, #ddfbfe);
    box-shadow: inset 0 0 0 1px #eaf4fd, 0 0 0 1px #a5bfdf;
}
.group {
    display: flex;
    flex-direction: column;
    height: 84px;
    border: 1px solid #a8bfda;
    border-radius: 3px;
    box-shadow: inset 0 0 0 1px rgba(255, 255, 255, 0.4), 1px 1px #f0f6fc;
}
.g-agent { width: 233px; }
.g-groups { width: 157px; }
.g-settings { width: 204px; }
.g-users { width: 201px; }
.g-help { width: 290px; }
.tools {
    display: flex;
    justify-content: space-evenly;
    height: 68px;
    padding-top: 4px;
}
.tools button {
    display: flex;
    flex-direction: column;
    align-items: center;
    white-space: nowrap;
    line-height: 13px;
}
.tools svg {
    width: 32px;
    height: 32px;
    margin-bottom: 3px;
}
.tools button:disabled { color: #8d8d8d; }
.group h2 {
    flex: 1;
    text-align: center;
    line-height: 14px;
    color: #3e6aaa;
    background: #c1d8f0;
}

/* workspace */
.workspace {
    flex: 1;
    display: flex;
    gap: 5px;
    margin-top: -1px;
    padding: 4px 4px 2px 1px;
    background: #6591cd;
    border-top: 1px solid #8ba9d4;
}
.sidebar {
    width: 247px;
    padding: 0 5px 5px 6px;
    background: #d6e4f3;
    border-top: 1px solid #eaf3fc;
}
.sidebar h2 {
    height: 22px;
    margin: 0 -5px 0 -6px;
    padding-left: 4px;
    line-height: 23px;
    font-size: 12px;
    background: #b7cde8;
    color: #1e4a96;
}
.tree {
    margin-top: 5px;
    min-height: 620px;
    background: #fff;
    color: #000;
    font: 10px/16px "Liberation Mono", "Noto Sans CJK SC", monospace;
}
.tree ul { padding-left: 19px; }
.tree li { position: relative; }
.tree li::before {
    content: "";
    position: absolute;
    left: 11px;
    top: 0;
    bottom: 0;
    border-left: 1px dotted #808080;
}
.tree > li:first-child::before { top: 8px; }
.tree li:last-child::before { height: 8px; }
.tree li::after {
    content: "";
    position: absolute;
    left: 11px;
    top: 8px;
    width: 11px;
    border-top: 1px dotted #808080;
}
.row {
    display: flex;
    align-items: center;
    height: 16px;
    padding-left: 7px;
    white-space: nowrap;
}
.toggle {
    position: relative;
    z-index: 1;
    width: 9px;
    height: 9px;
    margin-right: 7px;
    border: 1px solid #919191;
    border-radius: 1px;
    background: linear-gradient(#3c58a8, #3c58a8) center / 5px 1px no-repeat, linear-gradient(#fff, #ddd);
}
.row.leaf { padding-left: 23px; }
.row svg {
    width: 16px;
    height: 16px;
    margin-right: 2px;
}
.row span { padding: 0 2px; }
.row .selected { background: #f0f0f0; }
.content {
    flex: 1;
    background: #fff;
}
.content-head {
    height: 22px;
    background: #5f769b;
    border-bottom: 1px solid #54698c;
}
.statusbar {
    display: flex;
    height: 23px;
    color: #15296b;
    line-height: 22px;
    border-top: 1px solid #4a70a8;
    border-bottom: 1px solid #2e527f;
    background: linear-gradient(#e2eefc, #c9def9 8px, #aac8f2 9px, #c2dafa);
}
.ready {
    width: 475px;
    padding-left: 4px;
    border-right: 1px solid #6a8ec4;
}
.counts {
    flex: 1;
    display: flex;
    align-items: center;
    gap: 7px;
    padding-left: 7px;
    background: linear-gradient(#bcd3f2, #8fb3e4 8px, #7ba2da 9px, #a2c1ec);
}
.counts svg {
    width: 16px;
    height: 18px;
    margin: 0 1px 0 4px;
    display: block;
}
.counts input {
    flex: 1;
    height: 16px;
    border: none;
    background: #fff;
}
.grip {
    align-self: flex-end;
    width: 12px;
    height: 12px;
    background: radial-gradient(#4b6fa6 1px, transparent 2px) 0 0 / 4px 4px;
    clip-path: polygon(100% 0, 100% 100%, 0 100%);
}

/* dialogs */
.dialog {
    position: absolute;
    display: flex;
    flex-direction: column;
    padding: 0 5px 5px;
    border: 1px solid #3c4a58;
    border-radius: 7px;
}
.dialog-title {
    position: relative;
    display: flex;
    height: 27px;
    align-items: center;
}
.dialog-title h2 { font-size: 12px; }
.dialog-body {
    flex: 1;
    border: 1px solid #5f6a75;
    background: #f0f0f0;
    overflow: hidden;
    font: 10px/12px "Liberation Mono", monospace;
}
.dialog-close {
    position: absolute;
    right: 0;
    top: -1px;
    width: 47px;
    height: 19px;
    display: flex;
    align-items: center;
    justify-content: center;
    border: 1px solid #7f929c;
    border-top: none;
    border-radius: 0 0 5px 5px;
    box-shadow: inset 0 0 0 1px rgba(255, 255, 255, 0.6);
}
.dialog-close.red {
    border-color: #5a1d18;
    background: linear-gradient(#e3a193, #d4705c 8px, #bc3018 9px, #d2502f 14px, #e88668);
}
.dialog label {
    display: flex;
    align-items: center;
    gap: 2px;
}
.props {
    left: 220px;
    top: 115px;
    width: 811px;
    background: linear-gradient(90deg, rgba(222, 250, 255, 0.6), rgba(186, 250, 255, 0.6) 30%, rgba(206, 255, 255, 0.6) 85%, rgba(226, 248, 255, 0.7)) top / 100% 60px no-repeat, linear-gradient(transparent 60px, #f6f8fa 60px);
    backdrop-filter: blur(2px);
    box-shadow: inset 0 0 0 1px #fff, 2px 3px 8px rgba(0, 0, 0, 0.6);
}
.props .dialog-title { padding-left: 2px; gap: 4px; }
.filter {
    left: 345px;
    top: 318px;
    width: 605px;
    border-color: #1e2833;
    background: linear-gradient(#bcd7f4, #a9cbee 28px, #dcecfb 100px, #e8f3fd 130px, #b9d8f8 131px, #b2d3f6);
    box-shadow: inset 0 0 0 1px #e8f4ff, 3px 4px 14px 2px rgba(0, 0, 0, 0.75);
}
.filter .dialog-title {
    height: 28px;
    padding-left: 1px;
}
.smudge {
    flex: 1;
    height: 12px;
    margin: 0 104px 0 20px;
    filter: blur(3px);
    background:
        linear-gradient(90deg, transparent 170px, rgba(40, 60, 90, 0.5) 170px 232px, transparent 232px 240px, rgba(40, 60, 90, 0.5) 240px 288px, transparent 288px 296px, rgba(40, 60, 90, 0.5) 296px),
        linear-gradient(90deg, rgba(60, 90, 130, 0.15), rgba(60, 90, 130, 0.2));
}

/* form controls */
input[type="radio"], input[type="checkbox"] {
    appearance: none;
    flex: none;
    width: 13px;
    height: 13px;
    margin: 0;
    border: 1px solid #8e8f8f;
    background: linear-gradient(135deg, #cfd3d8, #fbfbfb);
    box-shadow: inset 0 0 0 2px #f4f4f4;
}
input[type="radio"] { border-radius: 50%; }
input[type="radio"]:checked {
    background: radial-gradient(circle at 5px 5px, #5fd0f8, #0c3c66 4px, #f0f0f0 5px);
}
input[type="checkbox"]:checked::before {
    content: "";
    display: block;
    width: 4px;
    height: 8px;
    margin: 0 0 0 4px;
    border: solid #3c55a0;
    border-width: 0 2px 2px 0;
    transform: rotate(35deg);
}
input[type="checkbox"]:disabled {
    border-color: #b5b5b5;
    background: #f6f6f6;
}
.btn {
    height: 19px;
    border: 1px solid #707070;
    border-radius: 3px;
    background: linear-gradient(#f3f3f3, #ebebeb 50%, #dcdcdc 50%, #cfcfcf);
    box-shadow: inset 0 0 0 1px #fbfbfb;
    overflow: hidden;
    white-space: nowrap;
}
.btn:disabled {
    color: #838383;
    border-color: #b0b0b0;
    background: #f4f4f4;
}
.btn.primary {
    border-color: #2c7ba8;
    box-shadow: inset 0 0 0 1px #48c8f4;
}

/* agent properties */
.props .dialog-body { padding: 11px 9px 11px 10px; }
.props-head {
    display: flex;
    justify-content: space-between;
    padding-left: 1px;
}
.scope label {
    height: 25px;
}
.props dl {
    display: grid;
    grid-template-columns: auto 121px;
    grid-auto-rows: 25px;
    align-items: center;
    column-gap: 15px;
    white-space: nowrap;
}
.props dt { text-align: right; }
.props-actions {
    display: flex;
    gap: 6px;
    margin: 8px 0 0 2px;
}
.props-actions .btn { width: 148px; }
.props-tabs {
    position: relative;
    display: flex;
    align-items: flex-end;
    height: 23px;
    margin: 7px 0 -1px 2px;
    font: 11px/16px "Liberation Sans", Arial, sans-serif;
}
.props-tabs button {
    height: 19px;
    padding: 0 4px;
    border: 1px solid #898c95;
    border-left-width: 0;
    background: linear-gradient(#f2f2f2, #ebebeb 50%, #ddd 50%, #d0d0d0);
    box-shadow: inset 1px 1px #fff;
    white-space: nowrap;
}
.props-tabs button:first-child { border-left-width: 1px; }
.props-tabs .active {
    height: 23px;
    padding: 0 5px 4px;
    background: #fff;
    border-bottom: none;
}
.pane {
    padding: 12px 9px 9px 12px;
    border: 1px solid #898c95;
    background: #fff;
    box-shadow: 3px 3px #fafafa;
    font: 11px/14px "Liberation Sans", Arial, sans-serif;
}
.pane p { white-space: nowrap; }
.pane-actions {
    display: flex;
    gap: 5px;
    margin: 9px 1px 11px 0;
}
.pane-actions .btn {
    display: flex;
    align-items: center;
    justify-content: center;
    width: 61px;
    height: 18px;
}
.pane-actions .search { margin-left: auto; }
.list {
    display: grid;
    grid-template-columns: 1fr 17px;
    grid-template-rows: 320px 17px;
    border: 1px solid #828790;
    background: #f0f0f0;
}
.list-rows {
    overflow: hidden;
    background: #fff;
}
.list table {
    width: 100%;
    border-collapse: collapse;
}
.list th {
    height: 25px;
    padding: 2px 7px 0;
    text-align: left;
    font-weight: normal;
    border-bottom: 1px solid #d5d5d5;
    background: linear-gradient(#fff 40%, #f3f4f6);
}
.list td {
    height: 17px;
    padding: 0 0 0 5px;
}
.list td label {
    height: 17px;
    gap: 3px;
}
.list td svg {
    width: 14px;
    height: 13px;
}
.list td input { margin-right: 1px; }
.vscroll, .hscroll {
    display: flex;
    align-items: center;
}
.vscroll {
    flex-direction: column;
    padding-top: 2px;
}
.hscroll { padding-left: 1px; }
.arrow {
    flex: none;
    width: 17px;
    height: 17px;
    background: #333;
}
.up { clip-path: polygon(8px 6px, 12px 10px, 4px 10px); }
.down { clip-path: polygon(8px 10px, 12px 6px, 4px 6px); margin-top: auto; }
.left { clip-path: polygon(6px 8px, 10px 4px, 10px 12px); }
.right { clip-path: polygon(10px 8px, 6px 4px, 6px 12px); margin-left: auto; }
.vscroll .thumb {
    width: 15px;
    height: 72px;
    border: 1px solid #979797;
    border-radius: 2px;
    background: repeating-linear-gradient(#555 0 1px, transparent 1px 3px) center / 7px 9px no-repeat, linear-gradient(90deg, #f4f4f4, #e8e8e8 50%, #d2d2d6 50%, #c4c4c8);
}
.hscroll .thumb {
    width: 682px;
    height: 15px;
    border: 1px solid #979797;
    border-radius: 2px;
    background: linear-gradient(#f4f4f4, #e8e8e8 50%, #d2d2d6 50%, #c4c4c8);
}

/* add filter */
.filter .dialog-body { padding: 10px 11px 13px 10px; }
.filter fieldset {
    min-width: 0;
    margin: 0 0 10px;
    padding: 0 0 0 10px;
    border: 1px solid #d0dbe4;
    border-radius: 4px;
    box-shadow: inset 0 0 0 1px #fbfcfd;
}
.filter legend {
    margin-left: -5px;
    padding: 0 2px;
    line-height: 12px;
}
.url {
    display: block;
    width: 380px;
    height: 21px;
    margin-top: 7px;
    padding: 0 3px;
    border: 1px solid #e3e9ef;
    border-top-color: #abadb3;
    background: #fff;
    font: inherit;
    outline: none;
}
.site-row {
    display: flex;
    align-items: center;
    gap: 44px;
    height: 26px;
    margin: 7px 0 1px;
    white-space: nowrap;
}
.limits p { margin-top: 13px; }
.days {
    display: grid;
    grid-template-columns: 71px 70px 77px 88px 83px 70px auto;
    margin: 14px 0 18px;
}
.mode {
    height: 26px;
}
.slots {
    display: flex;
    flex-direction: column;
    gap: 6px;
    margin: 5px 0 11px 1px;
}
.slot {
    display: flex;
    align-items: center;
}
.slot-name { width: 195px; }
.off { color: #6d6d6d; }
.spin {
    display: flex;
    width: 93px;
    height: 23px;
    margin-left: 7px;
    padding: 2px;
    border: 1px solid #b4b4b4;
    border-radius: 2px;
    background: #fff;
}
.spin input {
    flex: 1;
    min-width: 0;
    padding: 0 4px;
    border: none;
    background: none;
    font: inherit;
    color: #6d6d6d;
}
.spin div {
    display: flex;
    flex-direction: column;
    gap: 1px;
    width: 15px;
}
.spin button {
    flex: 1;
    border: 1px solid #c4c4c4;
    background: #f2f2f2;
    display: flex;
    align-items: center;
    justify-content: center;
}
.spin button::before {
    content: "";
    border: 2px solid transparent;
    border-bottom: 3px solid #8a8a8a;
    border-top: none;
}
.spin button:last-child::before { transform: rotate(180deg); }
.to { margin-left: 63px; }
.limits .example {
    margin: 0 0 10px;
    white-space: nowrap;
}
.filter-actions {
    display: flex;
    justify-content: flex-end;
    gap: 5px;
}
.filter-actions .btn { width: 103px; }
```
